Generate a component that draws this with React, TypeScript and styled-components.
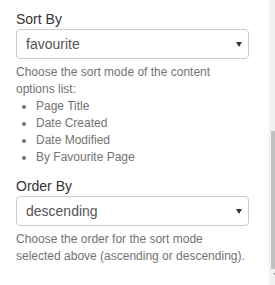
import styled, { createGlobalStyle } from "styled-components";

const GlobalStyle = createGlobalStyle`
  html, body {
    margin: 0;
    padding: 0;
    background: #ffffff;
  }
  body {
    font-family: "Liberation Sans", Arial, Helvetica, sans-serif;
    font-size: 14px;
    line-height: 1.42857;
    color: #333333;
  }
`;

// Panel with the settings form and a cut-off scrollbar on the right
const Panel = styled.div`
  display: flex;
  width: 275px;
  height: 285px;
  overflow: hidden;
`;

const Content = styled.div`
  flex: 1;
  min-width: 0;
  padding: 9px 20px 0 16px;
`;

const FormGroup = styled.div`
  margin-bottom: 10px;
`;

const Label = styled.label`
  display: block;
  font-size: 14px;
  line-height: 20px;
  font-weight: 400;
  color: #333333;
`;

const SelectWrap = styled.div`
  position: relative;
`;

const Select = styled.select`
  display: block;
  width: 100%;
  height: 30px;
  box-sizing: border-box;
  margin: 0;
  padding: 0 24px 0 9px;
  font-family: "Liberation Sans", Arial, sans-serif;
  font-size: 14px;
  color: #555555;
  background: #ffffff;
  border: 1px solid #cccccc;
  border-radius: 4px;
  appearance: none;
  -webkit-appearance: none;
  outline: none;
`;

const Caret = styled.svg`
  position: absolute;
  right: 7px;
  top: 13px;
  pointer-events: none;
`;

const HelpBlock = styled.div`
  margin-top: 5px;
  font-size: 12px;
  line-height: 17px;
  color: #737373;
`;

const OptionList = styled.ul`
  margin: 0;
  padding-left: 20px;
  list-style: disc;
`;

const ScrollTrack = styled.div`
  width: 6px;
  flex-shrink: 0;
  display: flex;
  flex-direction: column;
  padding-top: 131px;
  box-sizing: border-box;
  background: #f1f1f1;
  overflow: hidden;
`;

const ScrollThumb = styled.div`
  height: 138px;
  margin-left: 2px;
  width: 11px;
  flex-shrink: 0;
  background: #c1c1c1;
`;

const ScrollArrow = styled.svg`
  margin-top: 4px;
  margin-left: 4px;
  flex-shrink: 0;
`;

const CaretIcon = () => (
  <Caret width="6" height="5" viewBox="0 0 6 5">
    <polygon points="0,0 6,0 3,5" fill="#333333" />
  </Caret>
);

type FieldProps = {
  label: string;
  value: string;
  options: string[];
  children: React.ReactNode;
};

const SelectField = ({ label, value, options, children }: FieldProps) => (
  <FormGroup>
    <Label>{label}</Label>
    <SelectWrap>
      <Select defaultValue={value}>
        {options.map((o) => (
          <option key={o} value={o}>
            {o}
          </option>
        ))}
      </Select>
      <CaretIcon />
    </SelectWrap>
    <HelpBlock>{children}</HelpBlock>
  </FormGroup>
);

const App = () => {
  return (
    <Panel>
      <GlobalStyle />
      <Content>
        <SelectField
          label="Sort By"
          value="favourite"
          options={["title", "created", "modified", "favourite"]}
        >
          Choose the sort mode of the content options list:
          <OptionList>
            <li>Page Title</li>
            <li>Date Created</li>
            <li>Date Modified</li>
            <li>By Favourite Page</li>
          </OptionList>
        </SelectField>
        <SelectField
          label="Order By"
          value="descending"
          options={["ascending", "descending"]}
        >
          Choose the order for the sort mode selected above (ascending or
          descending).
        </SelectField>
      </Content>
      <ScrollTrack>
        <ScrollThumb />
        <ScrollArrow width="6" height="4" viewBox="0 0 6 4">
          <polygon points="0,0 6,0 3,4" fill="#a3a3a3" />
        </ScrollArrow>
      </ScrollTrack>
    </Panel>
  );
};

export default App;
